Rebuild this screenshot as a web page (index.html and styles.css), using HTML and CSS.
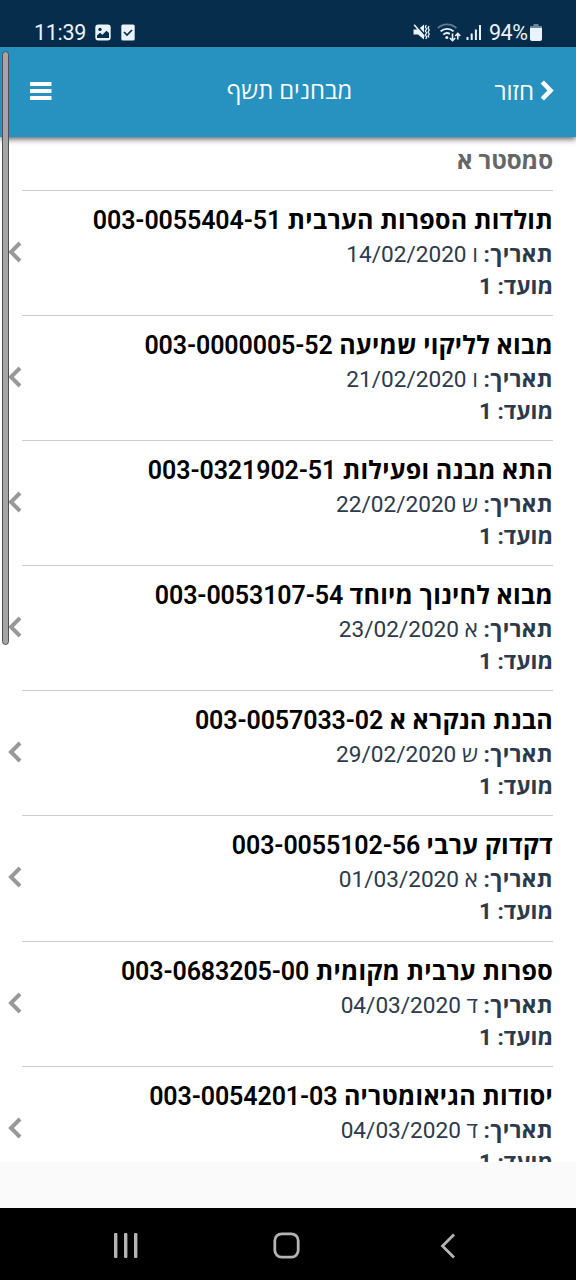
FILE: index.html
```html
<!DOCTYPE html>
<html lang="he" dir="rtl">
<head>
<meta charset="utf-8">
<title>מבחנים תשף</title>
<link rel="stylesheet" href="styles.css">
</head>
<body>
<div class="status" dir="ltr">
  <span class="time">11:39</span>
  <svg class="pic" width="16" height="17" viewBox="0 0 16 17"><rect x=".3" y=".5" width="15.4" height="16" rx="3" fill="#eaf2fb"/><circle cx="5" cy="5.4" r="1.7" fill="#062d4b"/><path d="M2 14v-2.500l3-2.800 2.400 2 4-4L14 9v5z" fill="#062d4b"/></svg>
  <svg class="check" width="14" height="17" viewBox="0 0 14 17"><rect x=".3" y=".5" width="13.4" height="16" rx="1.5" fill="#eaf2fb"/><path d="M3 8l3 3 5-5" fill="none" stroke="#062d4b" stroke-width="1.7"/></svg>
  <span class="spacer"></span>
  <svg class="mute" width="17" height="18" viewBox="0 0 17 18" fill="none" stroke="#eaf2fb"><path d="M.5 6.500h4.500l6-5v15l-6-5H.5z" fill="#eaf2fb" stroke="none"/><path d="M2.500 1l9.500 11" stroke="#062d4b" stroke-width="1.600"/><path d="M1.200 1.800l10 12" stroke-width="1.600"/><path d="M13.300 2l-1 2 1.400 2-1.400 2 1.400 2-1.400 2 1.400 2-.8 2M16 3l-.9 2 1.200 2-1.200 2 1.200 2-1.200 2 .8 1.500" stroke-width="1.300"/></svg>
  <svg class="wifi" width="24" height="19" viewBox="0 0 24 19" fill="none" stroke="#eaf2fb" stroke-width="1.9"><path d="M.8 5.200a13.200 13.200 0 0 1 18.600 0" stroke="#5d7b94"/><path d="M3.600 8.400a9.500 9.500 0 0 1 13 0"/><path d="M6.300 11.600a5.800 5.800 0 0 1 6.600-.8"/><circle cx="9.800" cy="14.600" r="1.500" fill="#eaf2fb" stroke="none"/><path d="M15.500 10.500v7m-2.700-2.500 2.700 2.700 2.700-2.700M20.800 16.500v-5.500m-2.500 2 2.500-2.500 2.500 2.500" stroke-width="1.600"/></svg>
  <svg class="signal" width="16" height="17" viewBox="0 0 16 17" fill="#eaf2fb"><rect x=".5" y="13" width="2" height="3"/><rect x="4.700" y="9.500" width="2" height="6.500"/><rect x="8.900" y="5.500" width="2" height="10.500"/><rect x="13" y="1" width="2" height="15"/></svg>
  <span class="pct">94%</span>
  <svg class="batt" width="12" height="17" viewBox="0 0 12 17"><path d="M3.500 0h5v2H11q1 0 1 1v2H0V3q0-1 1-1h2.500z" fill="#6d879d"/><path d="M0 4h12v11q0 2-2 2H2q-2 0-2-2z" fill="#eaf2fb"/></svg>
</div>
<header class="bar">
  <div class="back"><svg width="14" height="21" viewBox="0 0 14 21"><path d="M2.300 2 10.500 10.500l-8.200 8.500" fill="none" stroke="#fff" stroke-width="4.600"/></svg><span>חזור</span></div>
  <h1 class="title">מבחנים תשף</h1>
  <svg class="menu" width="22" height="18" viewBox="0 0 22 18" fill="#fff"><rect width="21.500" height="4" rx=".6"/><rect y="7" width="21.500" height="4" rx=".6"/><rect y="14" width="21.500" height="4" rx=".6"/></svg>
</header>
<main class="list">
  <h2 class="sem">סמסטר א</h2>
  <article class="exam"><h3>תולדות הספרות הערבית <span class="code">003-0055404-51</span></h3><p><b class="label">תאריך:</b> ו <span class="date">14/02/2020</span></p><p><b>מועד: 1</b></p><svg class="go" viewBox="0 0 14 22"><path d="M12 2 3 11l9 9"/></svg></article>
  <article class="exam"><h3>מבוא לליקוי שמיעה <span class="code">003-0000005-52</span></h3><p><b class="label">תאריך:</b> ו <span class="date">21/02/2020</span></p><p><b>מועד: 1</b></p><svg class="go" viewBox="0 0 14 22"><path d="M12 2 3 11l9 9"/></svg></article>
  <article class="exam"><h3>התא מבנה ופעילות <span class="code">003-0321902-51</span></h3><p><b class="label">תאריך:</b> ש <span class="date">22/02/2020</span></p><p><b>מועד: 1</b></p><svg class="go" viewBox="0 0 14 22"><path d="M12 2 3 11l9 9"/></svg></article>
  <article class="exam"><h3>מבוא לחינוך מיוחד <span class="code">003-0053107-54</span></h3><p><b class="label">תאריך:</b> א <span class="date">23/02/2020</span></p><p><b>מועד: 1</b></p><svg class="go" viewBox="0 0 14 22"><path d="M12 2 3 11l9 9"/></svg></article>
  <article class="exam"><h3>הבנת הנקרא א <span class="code">003-0057033-02</span></h3><p><b class="label">תאריך:</b> ש <span class="date">29/02/2020</span></p><p><b>מועד: 1</b></p><svg class="go" viewBox="0 0 14 22"><path d="M12 2 3 11l9 9"/></svg></article>
  <article class="exam"><h3>דקדוק ערבי <span class="code">003-0055102-56</span></h3><p><b class="label">תאריך:</b> א <span class="date">01/03/2020</span></p><p><b>מועד: 1</b></p><svg class="go" viewBox="0 0 14 22"><path d="M12 2 3 11l9 9"/></svg></article>
  <article class="exam"><h3>ספרות ערבית מקומית <span class="code">003-0683205-00</span></h3><p><b class="label">תאריך:</b> ד <span class="date">04/03/2020</span></p><p><b>מועד: 1</b></p><svg class="go" viewBox="0 0 14 22"><path d="M12 2 3 11l9 9"/></svg></article>
  <article class="exam"><h3>יסודות הגיאומטריה <span class="code">003-0054201-03</span></h3><p><b class="label">תאריך:</b> ד <span class="date">04/03/2020</span></p><p><b>מועד: 1</b></p><svg class="go" viewBox="0 0 14 22"><path d="M12 2 3 11l9 9"/></svg></article>
</main>
<div class="foot"></div>
<nav class="nav" dir="ltr">
  <svg width="24" height="26" viewBox="0 0 24 26" fill="#b4b4b4"><rect x="0" width="3.400" height="25" rx="1"/><rect x="10" width="3.400" height="25" rx="1"/><rect x="20" width="3.400" height="25" rx="1"/></svg>
  <svg class="home" width="27" height="27" viewBox="0 0 27 27" fill="none" stroke="#b4b4b4" stroke-width="2.800"><rect x="1.800" y="1.800" width="23.400" height="23.400" rx="7"/></svg>
  <svg width="16" height="26" viewBox="0 0 16 26" fill="none" stroke="#b4b4b4" stroke-width="2.800"><path d="M14 1.500 2.500 13l11.500 11.500"/></svg>
</nav>
<div class="thumb"></div>
</body>
</html>
```
FILE: styles.css
```css
* { box-sizing: border-box; }
body { margin: 0; width: 576px; height: 1280px; overflow: hidden; position: relative; display: flex; flex-direction: column; background: #fff; font-family: Roboto, "Open Sans", sans-serif; }
h1, h2, h3, p { margin: 0; font-weight: 400; }
svg { display: block; flex: none; }
.status { height: 47px; flex: none; background: #062d4b; color: #eaf2fb; display: flex; align-items: center; padding: 17px 34px 0 34px; font-size: 21.5px; }
.time { width: 53px; letter-spacing: -.3px; }
.pic { margin-left: 8px; }
.check { margin-left: 10px; }
.spacer { flex: 1; }
.wifi { margin-left: 7px; }
.signal { margin-left: 5px; }
.pct { margin: 0 2px 0 7px; width: 39px; letter-spacing: -.5px; }
.bar { height: 90px; flex: none; background: #2792c0; color: #fff; display: grid; grid-template-columns: 1fr auto 1fr; align-items: center; padding: 0 22px 4px 24px; box-shadow: 0 2px 6px rgba(0,0,0,.65); position: relative; z-index: 1; }
.back { display: flex; align-items: center; gap: 6px; font-size: 24px; }
.title { font-size: 23.8px; padding-right: 2px; margin-left: 5px; transform: translateX(-1px); }
.menu { justify-self: end; margin: 2px 0 0 6px; }
.list { height: 1025px; flex: none; overflow: hidden; }
.sem { height: 54px; margin: 0 23px 0 22px; border-bottom: 1px solid #ccc; padding-top: 8px; line-height: 32px; font-size: 24px; font-weight: 700; color: #666; }
.exam { height: 125.1px; margin: 0 23px 0 22px; border-bottom: 1px solid #ccc; padding-top: 12px; position: relative; color: #2d3a4b; font-size: 22.6px; }
.exam h3 { height: 36px; line-height: 36px; font-size: 25px; font-weight: 700; letter-spacing: .25px; color: #000; white-space: nowrap; }
.code { font-weight: 600; letter-spacing: -.1px; }
.exam p { height: 32px; line-height: 32px; white-space: nowrap; }
.exam b { font-weight: 700; }
.exam .label { letter-spacing: .35px; }
.go { position: absolute; left: -14px; top: 50px; width: 14px; height: 22px; fill: none; stroke: #999; stroke-width: 4; }
.foot { height: 46px; flex: none; background: #fafafa; }
.nav { height: 72px; flex: none; background: #000; display: flex; align-items: center; justify-content: space-between; padding: 3px 120px 0 114px; }
.home { margin-right: 5px; }
.thumb { position: absolute; z-index: 2; left: 2px; top: 51px; width: 7px; height: 594px; border: 1px solid #4b5052; border-radius: 4px; background: #a5a5a5; }
```
